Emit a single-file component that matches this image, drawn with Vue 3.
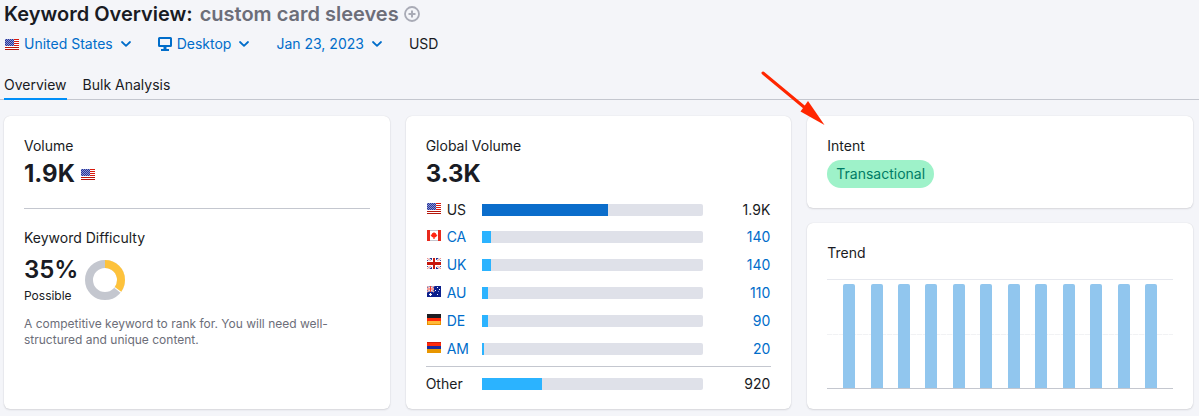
<script setup>
import { h } from 'vue'

const svgFlag = (children) =>
  h('svg', { viewBox: '0 0 14 11', width: 14, height: 11, 'aria-hidden': 'true', style: { display: 'block' } }, children)
const rect = (x, y, width, height, fill) => h('rect', { x, y, width, height, fill })
const path = (d, attrs) => h('path', { d, fill: 'none', ...attrs })

const flagArt = {
  US: () => {
    const parts = [rect(0, 0, 14, 11, '#ffffff')]
    for (let y = 0; y < 11; y += 2) parts.push(rect(0, y, 14, 1, y > 6 ? '#b5160c' : '#d8190d'))
    parts.push(rect(0, 0, 9, 7, '#26349c'))
    for (let y = 0; y < 7; y++) {
      for (let x = y % 2; x < 9; x += 2) parts.push(rect(x, y, 1, 1, '#8d97d0'))
    }
    return parts
  },
  CA: () => [
    rect(0, 0, 14, 11, '#ffffff'),
    rect(0, 0, 14, 1, '#c4c7cf'),
    rect(0, 10, 14, 1, '#c4c7cf'),
    rect(0, 0, 3, 11, '#e8291c'),
    rect(11, 0, 3, 11, '#e8291c'),
    path('M7 2 8 3.3 9 3 8.9 4.2 10.5 5 9 7 7.6 7.4V9H6.4V7.4L5 7 3.5 5 5.1 4.2 5 3 6 3.3Z', { fill: '#ff2410' })
  ],
  UK: () => [
    rect(0, 0, 14, 11, '#1f2d8c'),
    path('M0 0 14 11M14 0 0 11', { stroke: '#ffffff', 'stroke-width': 2.6 }),
    path('M0 0 14 11M14 0 0 11', { stroke: '#d8190d', 'stroke-width': 0.5 }),
    rect(5, 0, 4, 11, '#ffffff'),
    rect(0, 3, 14, 5, '#ffffff'),
    rect(6, 0, 2, 11, '#c8170c'),
    rect(0, 4, 14, 3, '#c8170c')
  ],
  AU: () => [
    rect(0, 0, 14, 11, '#0c1f8c'),
    path('M0 0 7 6M7 0 0 6', { stroke: '#ffffff', 'stroke-width': 1.6 }),
    path('M0 0 7 6M7 0 0 6', { stroke: '#f0554a', 'stroke-width': 0.6 }),
    path('M3.5 0V6M0 3H7', { stroke: '#ffffff', 'stroke-width': 2 }),
    path('M3.5 0V6M0 3H7', { stroke: '#f03a2e', 'stroke-width': 1 }),
    path('M3.5 7V10M2 8.5H5', { stroke: '#ffffff', 'stroke-width': 1.2 }),
    rect(10, 1, 1, 1, '#ffffff'),
    rect(8, 4, 1, 1, '#ffffff'),
    rect(12, 3, 1, 1, '#ffffff'),
    rect(11, 5, 1, 1, '#8d97d0'),
    rect(10, 8, 1, 1, '#ffffff')
  ],
  DE: () => [
    rect(0, 0, 14, 4, '#1d1d22'),
    rect(0, 4, 14, 3, '#ff2a0a'),
    rect(0, 7, 14, 4, '#e89000'),
    rect(1, 7, 12, 3, '#ffb937')
  ],
  AM: () => [
    rect(0, 0, 14, 4, '#ff2a0a'),
    rect(0, 0, 14, 1, '#cf1c0c'),
    rect(0, 4, 14, 3, '#1a2a9c'),
    rect(0, 7, 14, 4, '#e89600')
  ]
}

const Flag = (props) => svgFlag(flagArt[props.code]())
Flag.props = ['code']

const Chevron = () =>
  h('svg', { viewBox: '0 0 10 6', width: 10, height: 6, 'aria-hidden': 'true' }, [
    path('M1 1 5 4.8 9 1', { stroke: 'currentColor', 'stroke-width': 1.8, 'stroke-linecap': 'round', 'stroke-linejoin': 'round' })
  ])

const countries = [
  { code: 'US', volume: '1.9K', share: 57, current: true },
  { code: 'CA', volume: '140', share: 4 },
  { code: 'UK', volume: '140', share: 4 },
  { code: 'AU', volume: '110', share: 3 },
  { code: 'DE', volume: '90', share: 2.7 },
  { code: 'AM', volume: '20', share: 1.2 }
]
const other = { volume: '920', share: 27.5 }
const trend = Array(12).fill(96)
</script>

<template>
  <div class="page">
    <header>
      <h1>
        Keyword Overview: <span class="keyword">custom card sleeves</span>
        <button class="add" type="button" aria-label="Add keyword">
          <svg viewBox="0 0 16 16" width="16" height="16" aria-hidden="true">
            <circle cx="8" cy="8" r="7" fill="none" stroke="#a9abb6" stroke-width="1.8" />
            <path d="M8 4.5V11.5M4.5 8H11.5" stroke="#a9abb6" stroke-width="2" />
          </svg>
        </button>
      </h1>
      <div class="filters">
        <button type="button"><Flag code="US" /><span>United States</span><Chevron class="chevron" /></button>
        <button type="button">
          <svg viewBox="0 0 14 14" width="14" height="14" aria-hidden="true">
            <rect x="1" y="1" width="12" height="8" rx="0.5" fill="none" stroke="currentColor" stroke-width="2" />
            <path d="M5.5 10H8.5V12H11V14H3V12H5.5Z" fill="currentColor" />
          </svg>
          <span>Desktop</span><Chevron class="chevron" />
        </button>
        <button type="button"><span>Jan 23, 2023</span><Chevron class="chevron" /></button>
        <span class="currency">USD</span>
      </div>
      <nav class="tabs">
        <a href="#overview" class="active" aria-current="page">Overview</a>
        <a href="#bulk">Bulk Analysis</a>
      </nav>
    </header>

    <main class="cards">
      <section class="card">
        <h2>Volume</h2>
        <div class="figure">1.9K <Flag code="US" /></div>
        <hr />
        <h2>Keyword Difficulty</h2>
        <div class="difficulty">
          <div>
            <div class="figure">35%</div>
            <div class="level">Possible</div>
          </div>
          <svg viewBox="0 0 40 40" width="40" height="40" role="img" aria-label="35 percent">
            <circle cx="20" cy="20" r="16" fill="none" stroke="#c4c7cf" stroke-width="8" />
            <circle cx="20" cy="20" r="16" fill="none" stroke="#ffffff" stroke-width="8" pathLength="100" stroke-dasharray="36 64" transform="rotate(-90 20 20)" />
            <circle cx="20" cy="20" r="16" fill="none" stroke="#fdc23c" stroke-width="8" pathLength="100" stroke-dasharray="35 65" transform="rotate(-90 20 20)" />
          </svg>
        </div>
        <p>A competitive keyword to rank for. You will need well-structured and unique content.</p>
      </section>

      <section class="card global">
        <h2>Global Volume</h2>
        <div class="figure">3.3K</div>
        <table>
          <tbody>
            <tr v-for="c in countries" :key="c.code" :class="{ current: c.current }">
              <th scope="row">
                <div class="country">
                  <Flag :code="c.code" />
                  <span v-if="c.current">{{ c.code }}</span>
                  <a v-else :href="'#' + c.code">{{ c.code }}</a>
                </div>
              </th>
              <td class="share"><div class="track"><div class="fill" :style="{ width: c.share + '%' }"></div></div></td>
              <td class="volume">
                <span v-if="c.current">{{ c.volume }}</span>
                <a v-else :href="'#' + c.code">{{ c.volume }}</a>
              </td>
            </tr>
          </tbody>
          <tfoot>
            <tr>
              <th scope="row">Other</th>
              <td class="share"><div class="track"><div class="fill" :style="{ width: other.share + '%' }"></div></div></td>
              <td class="volume">{{ other.volume }}</td>
            </tr>
          </tfoot>
        </table>
      </section>

      <div class="stack">
        <section class="card intent">
          <h2>Intent</h2>
          <span class="pill">Transactional</span>
          <svg class="arrow" viewBox="0 0 64 56" width="64" height="56" aria-hidden="true">
            <path d="M2 2 46 38.5" stroke="#ff2600" stroke-width="3" stroke-linecap="round" />
            <path d="M47 30 63.5 54 39.5 40.5Z" fill="#ff2600" />
          </svg>
        </section>
        <section class="card trend">
          <h2>Trend</h2>
          <div class="chart">
            <div v-for="(v, i) in trend" :key="i" class="column">
              <div class="bar" :style="{ height: v + '%' }"></div>
            </div>
          </div>
        </section>
      </div>
    </main>
  </div>
</template>

<style>
body {
  background: #f4f5f9;
}
</style>

<style scoped>
.page {
  font: 14px/20px Inter, sans-serif;
  color: #191b23;
}
h1, h2, p {
  margin: 0;
}
h1 {
  display: flex;
  align-items: center;
  padding: 0 4px;
  font-size: 20px;
  line-height: 28px;
  font-weight: 600;
}
.keyword {
  margin-left: 7px;
  color: #6c6e79;
}
button {
  display: flex;
  align-items: center;
  padding: 0;
  border: 0;
  background: none;
  color: #006dca;
  font: inherit;
  cursor: pointer;
}
.add {
  margin-left: 5px;
}
.filters {
  display: flex;
  align-items: center;
  gap: 27px;
  padding: 6px 5px 0;
}
.filters button {
  gap: 5px;
}
.chevron {
  margin-left: 3px;
}
a {
  color: #006dca;
  text-decoration: none;
}
.tabs {
  display: flex;
  gap: 16px;
  margin-top: 16px;
  padding: 0 4px;
  border-bottom: 1px solid #c4c7cf;
}
.tabs a {
  padding: 5px 0 4px;
  color: #191b23;
}
.tabs .active {
  margin-bottom: -1px;
  padding-bottom: 3px;
  border-bottom: 2px solid #008ff8;
}
.cards {
  display: grid;
  grid-template-columns: repeat(3, minmax(0, 1fr));
  gap: 16px;
  padding: 16px 6px 7px 4px;
}
.card {
  padding: 20px;
  border-radius: 6px;
  background: #ffffff;
  box-shadow: 0 0 1px rgba(25, 27, 35, 0.16), 0 1px 2px rgba(25, 27, 35, 0.12);
}
.global {
  padding-bottom: 8px;
}
h2 {
  font-size: 14px;
  line-height: 20px;
  font-weight: 400;
}
.figure {
  display: flex;
  align-items: center;
  gap: 6px;
  padding-top: 2px;
  font-size: 24px;
  line-height: 32px;
  font-weight: 700;
}
hr {
  height: 1px;
  margin: 18px 0 19px;
  border: 0;
  background: #c4c7cf;
}
.difficulty {
  display: flex;
  align-items: center;
  gap: 7px;
}
.difficulty .figure {
  padding-top: 6px;
  font-weight: 600;
}
.level {
  padding-top: 2px;
  font-size: 12px;
  line-height: 16px;
}
.difficulty svg {
  margin-top: 8px;
}
p {
  margin-top: 12px;
  color: #6c6e79;
  font-size: 12px;
  line-height: 16px;
}
table {
  width: 100%;
  margin-top: 6px;
  border-spacing: 0;
  table-layout: fixed;
}
th, td {
  height: 28px;
  padding: 0;
  font-weight: 400;
  text-align: left;
}
.current th, .current td {
  height: 27px;
}
th {
  width: 56px;
}
.country {
  display: flex;
  gap: 6px;
  padding-left: 1px;
}
.country svg {
  margin-top: 3px;
}
.share {
  width: 64%;
}
.track {
  height: 12px;
  overflow: hidden;
  border-radius: 0 2px 2px 0;
  background: #dfe1e9;
}
.fill {
  height: 100%;
  background: #2bb3ff;
}
.current .fill {
  background: #0b6dcb;
}
td.volume {
  padding-right: 1px;
  text-align: right;
}
tbody tr:last-child > * {
  padding-bottom: 3px;
}
tfoot th, tfoot td {
  height: 34px;
  border-top: 1px solid #c4c7cf;
}
.stack {
  display: flex;
  flex-direction: column;
  gap: 15px;
}
.intent {
  position: relative;
}
.pill {
  display: inline-block;
  margin-top: 4px;
  padding: 4px 9px;
  border-radius: 14px;
  background: #9ef2c9;
  color: #007c65;
  vertical-align: top;
}
.arrow {
  position: absolute;
  top: -45px;
  left: -46px;
}
.chart {
  display: flex;
  align-items: flex-end;
  height: 108px;
  margin-top: 16px;
  padding: 0 8px;
  border-top: 1px solid #e6e8ee;
  border-bottom: 1px solid #c4c7cf;
  background: repeating-linear-gradient(90deg, #f1f2f4 0 5px, #fafafb 5px 6px) 0 54px / 100% 1px no-repeat;
}
.column {
  display: flex;
  flex: 1;
  align-items: flex-end;
  justify-content: center;
  height: 100%;
}
.bar {
  width: 12px;
  border-radius: 2px 2px 0 0;
  background: #91c6ee;
}
</style>
